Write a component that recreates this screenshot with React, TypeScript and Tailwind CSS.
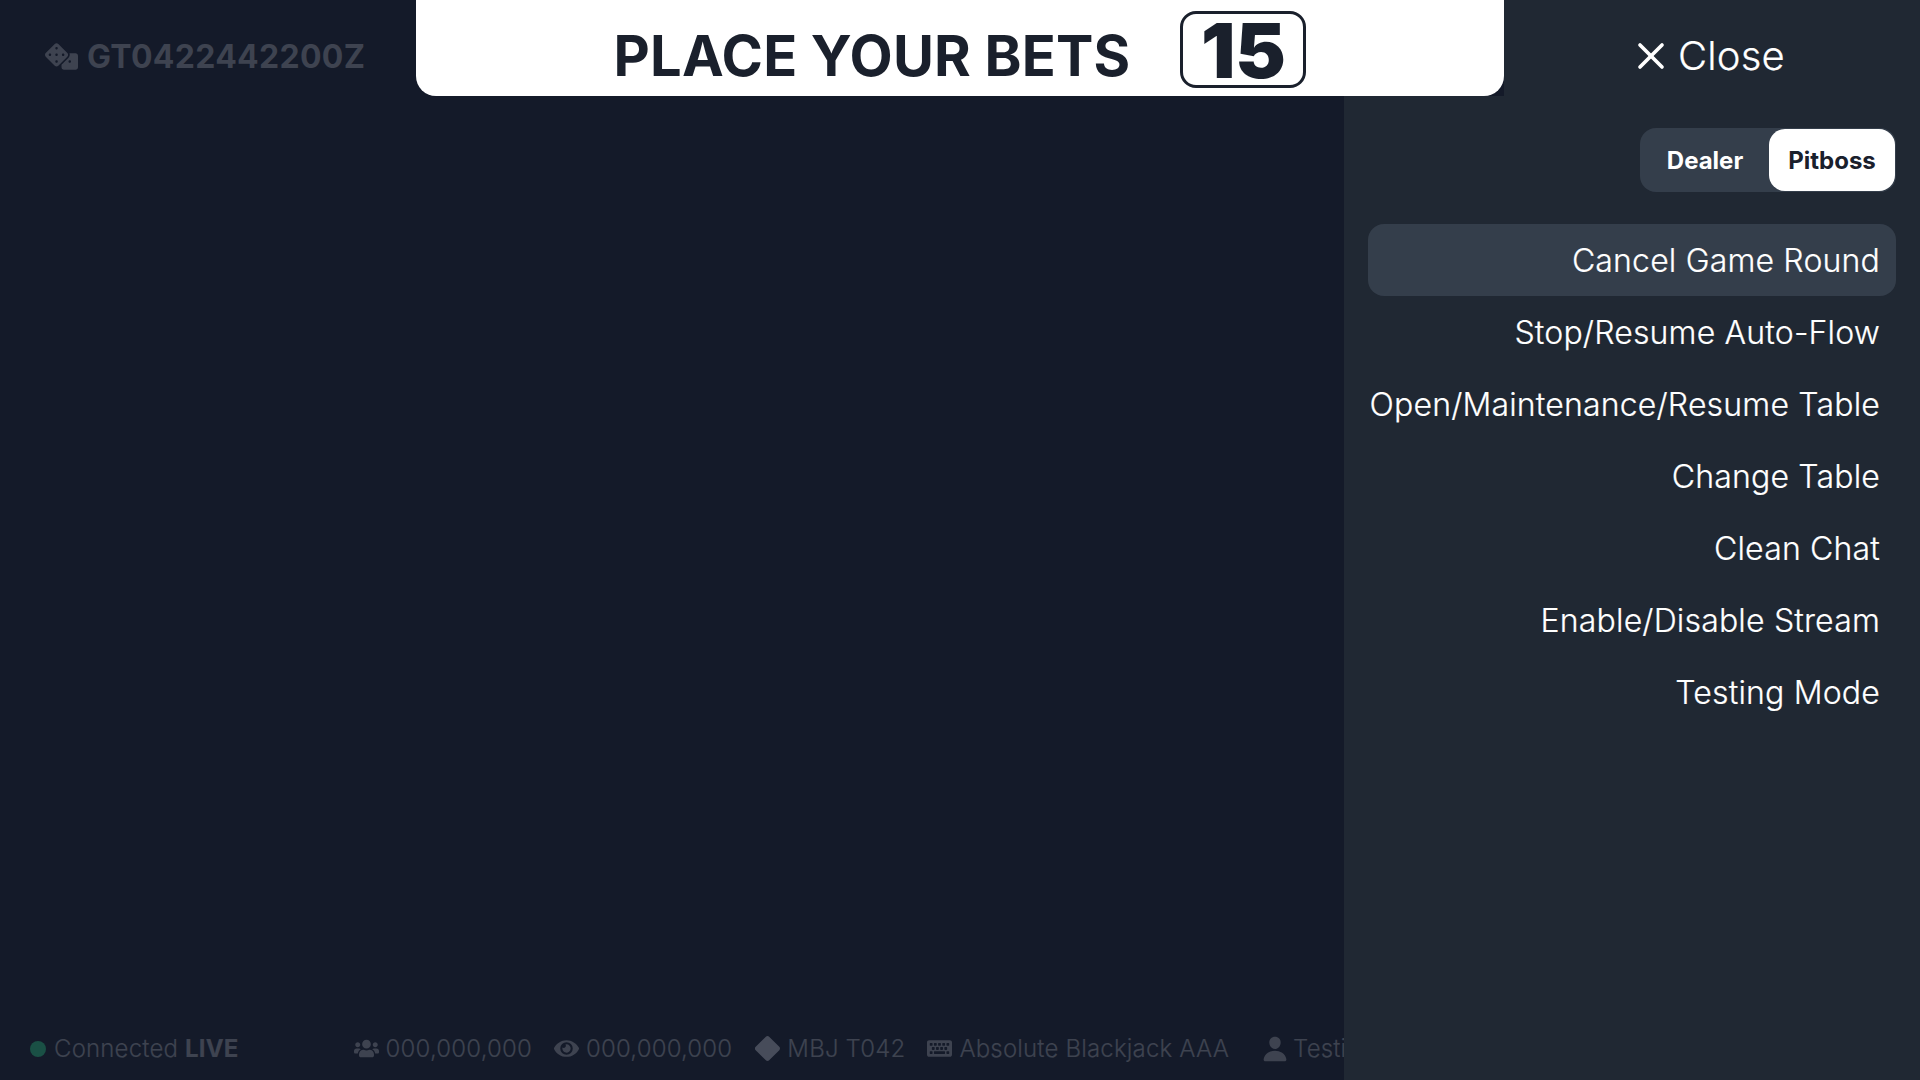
import React from 'react';
import { X } from 'lucide-react';
import { FaDice, FaUsers, FaEye, FaKeyboard } from 'react-icons/fa';
import { BsDiamondFill } from 'react-icons/bs';
import { IoPerson } from 'react-icons/io5';

const actions = [
  'Cancel Game Round',
  'Stop/Resume Auto-Flow',
  'Open/Maintenance/Resume Table',
  'Change Table',
  'Clean Chat',
  'Enable/Disable Stream',
  'Testing Mode',
];

const StatusItem: React.FC<{ icon: React.ReactNode; label: string; className?: string }> = ({ icon, label, className }) => (
  <div className={`flex items-center gap-[7px] shrink-0 ${className ?? ''}`}>
    {icon}
    <span>{label}</span>
  </div>
);

export default function App() {
  return (
    <div className="relative flex h-screen w-screen overflow-hidden bg-[#141a29] font-['Inter',sans-serif]">
      <div className="flex min-w-0 flex-1 flex-col justify-between overflow-hidden text-[#3e4350]">
        <div className="flex h-[113px] items-center gap-[9px] pl-[45px] text-[32px] font-bold tracking-[0.3px]">
          <FaDice size={33} />
          <span className="pt-[1px]">GT0422442200Z</span>
        </div>

        <div className="flex h-[64px] items-center whitespace-nowrap pl-[30px] pt-[1px] text-2xl font-light tracking-[0.17px] [-webkit-text-stroke:0.2px_#3e4350]">
          <span className="mr-2 h-4 w-4 shrink-0 rounded-full bg-[#1a5045]" />
          <span className="shrink-0">
            Connected <span className="font-bold">LIVE</span>
          </span>
          <StatusItem className="ml-[115px]" icon={<FaUsers size={25} />} label="000,000,000" />
          <StatusItem className="ml-[22px]" icon={<FaEye size={25} />} label="000,000,000" />
          <StatusItem className="ml-[23px]" icon={<BsDiamondFill size={25} className="text-[#474c5a]" />} label="MBJ T042" />
          <StatusItem className="ml-[22px]" icon={<FaKeyboard size={25} />} label="Absolute Blackjack AAA" />
          <StatusItem className="ml-[32px]" icon={<IoPerson size={28} className="-mr-[3px]" />} label="Testing" />
        </div>
      </div>

      <aside className="flex w-[576px] shrink-0 flex-col bg-[#202833] px-6 text-white">
        <div className="-mr-6 flex h-[112px] justify-end">
          <button className="flex w-[416px] items-center justify-center gap-[9px] pr-[6px] text-[40px] font-light tracking-[0.17px] [-webkit-text-stroke:0.2px_white]">
            <X size={44} strokeWidth={2} className="-mx-[4px]" />
            Close
          </button>
        </div>

        <div className="mt-4 ml-auto grid h-16 w-[256px] grid-cols-[128px_1fr] rounded-2xl bg-[#343e4b] p-px text-2xl font-bold">
          <button className="rounded-2xl pt-[2px]">Dealer</button>
          <button className="rounded-2xl bg-white pt-[2px] text-[#1a202c]">Pitboss</button>
        </div>

        <div className="mt-8 flex flex-col">
          {actions.map((action, i) => (
            <button
              key={action}
              className={`h-[72px] whitespace-nowrap rounded-2xl pr-4 pt-[2px] text-right text-[32px] font-light tracking-[0.17px] [-webkit-text-stroke:0.2px_white] ${i === 0 ? 'bg-[#343e4b]' : ''}`}
            >
              {action}
            </button>
          ))}
        </div>
      </aside>

      <div className="absolute left-[416px] top-0 h-24 w-[1088px] bg-[#141a29]">
        <div className="flex h-full items-center justify-center gap-[50px] rounded-b-[20px] bg-white text-[#1a202c]">
          <span className="pt-[15px] text-[56px] font-bold tracking-[0.2px]">PLACE YOUR BETS</span>
          <span className="mt-[3px] flex h-[77px] w-[126px] items-center justify-center rounded-2xl border-[3px] border-[#1a202c] text-[76px] font-black">
            15
          </span>
        </div>
      </div>
    </div>
  );
}
